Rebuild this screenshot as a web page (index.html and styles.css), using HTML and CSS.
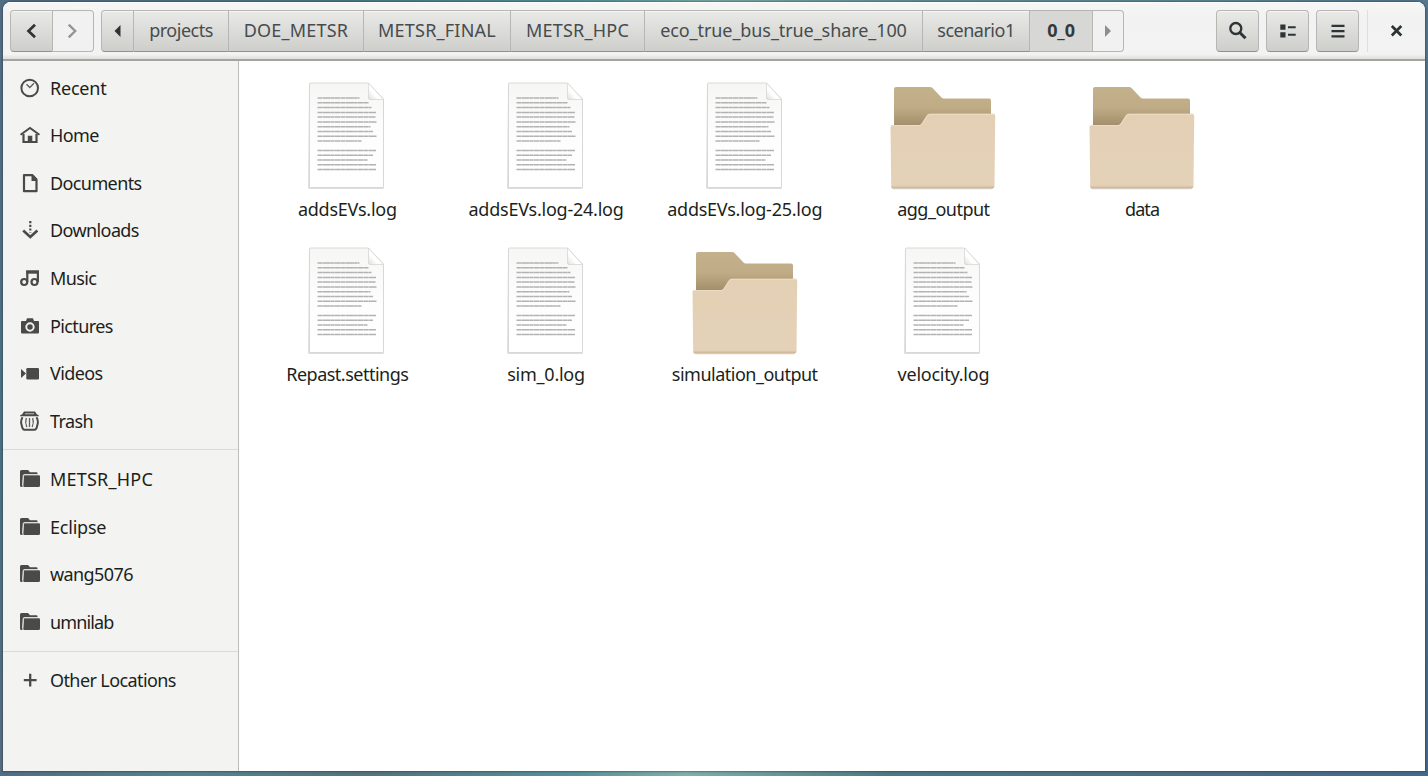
FILE: index.html
```html
<!DOCTYPE html>
<html lang="en">
<head>
<meta charset="utf-8">
<title>0_0</title>
<link rel="stylesheet" href="styles.css">
</head>
<body>
<svg class="defs" width="0" height="0">
  <defs>
    <linearGradient id="paper" x1="0" y1="0" x2="0" y2="1"><stop offset="0" stop-color="#f6f6f5"/><stop offset=".5" stop-color="#fdfdfd"/><stop offset="1" stop-color="#fff"/></linearGradient>
    <linearGradient id="fold" x1="0" y1="1" x2="1" y2="0"><stop offset="0" stop-color="#dededc"/><stop offset=".35" stop-color="#fff"/><stop offset="1" stop-color="#fff"/></linearGradient>
    <linearGradient id="back" gradientUnits="userSpaceOnUse" x1="0" y1="5" x2="0" y2="43"><stop offset="0" stop-color="#c3b18b"/><stop offset=".55" stop-color="#bfac86"/><stop offset="1" stop-color="#a38f6b"/></linearGradient>
    <linearGradient id="front" x1="0" y1="0" x2="0" y2="1"><stop offset="0" stop-color="#e3cfb4"/><stop offset=".96" stop-color="#e4d2b8"/><stop offset="1" stop-color="#cfb48f"/></linearGradient>
    <symbol id="doc" viewBox="0 0 106 108">
      <path d="M15 2h60l15 16v87.500q0 1.500-1.500 1.500h-73q-1.500 0-1.500-1.500z" fill="#000" opacity=".13"/>
      <path d="M16 1h58.500l15 16v87.500q0 1-1 1H16.500q-1 0-1-1V1.500z" fill="url(#paper)" stroke="#d2d2d0" stroke-width=".8"/>
      <path d="M74.500 1v15q0 1.500 1.500 1.500h13.500z" fill="url(#fold)" stroke="#d2d2d0" stroke-width=".7"/>
      <g fill="none" stroke="#b2b2b2" stroke-width="1.500" stroke-dasharray="5 .3 8 .2 3 .3 6 .3">
        <path d="M23.500 16h42M23.500 20.800h51M23.500 25.600h54M23.500 30.400h58.500M23.500 35.100h58M23.500 39.900h59M23.500 44.700h53M23.500 49.500h55.500M23.500 54.300h59M23.500 59h44M23.500 68.500h58.500M23.500 73.200h55.500M23.500 78h50M23.500 82.800h58.500M23.500 87.500h58.500"/>
      </g>
    </symbol>
    <symbol id="folder" viewBox="0 0 106 108">
      <path d="M1.500 104h102v1.500q0 1.800-2 1.800H3.500q-2 0-2-1.800z" fill="#000" opacity=".18"/>
      <path d="M4 44V7q0-2 2-2h34q1.500 0 2.500 1l9 9.500q1 1 2.500 1h45q2 0 2 2V44z" fill="url(#back)"/>
      <path d="M.5 45q0-2 2-2h26q2 0 3-1.500l5.500-8.500q1-1.300 2.500-1.300h63.500q2.200 0 2.200 2l-.7 70.500q0 2-2 2H3.200q-2 0-2-2z" fill="url(#front)"/>
      <path d="M1.500 43.600H29q2 0 3-1.500l5.500-8.500q1-1.300 2.500-1.300h64" fill="none" stroke="#eddcc6" stroke-width="1"/>
    </symbol>
    <symbol id="s-folder" viewBox="0 0 20 20">
      <path d="M1.500 1H8l2 2.200h6.500q1 0 1 1v1H4.800q-1.600 0-1.600 1.600L2.500 18h-1Q0 18 0 16.500v-14Q0 1 1.500 1z" fill="#4a4a48"/>
      <path d="M4.800 6.300h14q1.200 0 1.200 1.200v9q0 1.500-1.500 1.500h-14q-1.200 0-1.200-1.200l.5-9.500q0-1 1-1z" fill="#4a4a48"/>
      <path d="M2.500 16.500l.7-9.700q0-1.200 1.500-1.200h12.800" fill="none" stroke="#dededc" stroke-width="1"/>
    </symbol>
  </defs>
</svg>
<div class="window">
  <header class="header">
    <div class="group nav">
      <button class="btn"><svg class="ic" viewBox="0 0 20 20"><path d="M14 3.700 7.500 10l6.500 6.300" fill="none" stroke="#2e3436" stroke-width="2.700"/></svg></button>
      <button class="btn off"><svg class="ic" viewBox="0 0 20 20"><path d="M5.700 3.700 12.200 10l-6.500 6.300" fill="none" stroke="#929595" stroke-width="2.400"/></svg></button>
    </div>
    <div class="group path">
      <button class="btn p-start"><svg class="ic" viewBox="0 0 20 20"><path d="M12.500 4v12L6.500 10z" fill="#2e3436"/></svg></button>
      <button class="btn p1 tight">projects</button>
      <button class="btn p2 caps">DOE_METSR</button>
      <button class="btn p3 caps">METSR_FINAL</button>
      <button class="btn p4 caps">METSR_HPC</button>
      <button class="btn p5 even">eco_true_bus_true_share_100</button>
      <button class="btn p6 tight">scenario1</button>
      <button class="btn p7 active even">0_0</button>
      <button class="btn off p-end"><svg class="ic" viewBox="0 0 20 20"><path d="M7 4v12l6-6z" fill="#8b8e8f"/></svg></button>
    </div>
    <div class="tools">
      <button class="btn tool"><svg class="ic" viewBox="0 0 20 20"><circle cx="7.800" cy="7.500" r="5.500" fill="none" stroke="#2e3436" stroke-width="2.300"/><path d="m11.500 11.300 6 6" stroke="#2e3436" stroke-width="3"/></svg></button>
      <button class="btn tool"><svg class="ic" viewBox="0 0 20 20"><path d="M2.300 3.500h5.200v5.200H2.300zM2.300 11.200h5.200v5.200H2.300zM10 5.300h7.700v2H10zM10 12.800h7.700v2H10z" fill="#2e3436"/></svg></button>
      <button class="btn tool"><svg class="ic" viewBox="0 0 20 20"><path d="M3.500 3.700h13V6h-13zM3.500 9h13v2.300h-13zM3.500 14.200h13v2.300h-13z" fill="#2e3436"/></svg></button>
    </div>
    <button class="close"><svg class="ic" viewBox="0 0 20 20"><path d="m4.800 5 9.500 9.500M14.300 5 4.800 14.500" stroke="#2e3436" stroke-width="2.700"/></svg></button>
  </header>
  <div class="body">
    <nav class="sidebar">
      <ul class="places">
        <li><svg class="ic" viewBox="0 0 20 20"><circle cx="9.700" cy="10" r="8.300" fill="none" stroke="#4a4a48" stroke-width="2"/><path d="m6.500 6.200 3.300 3.300 4.200-4.300" fill="none" stroke="#5c5c5a" stroke-width="1.300"/></svg><span class="near">Recent</span></li>
        <li><svg class="ic" viewBox="0 0 20 20"><path d="M.5 9.800 10 3l9.500 6.800" fill="none" stroke="#4a4a48" stroke-width="2"/><path d="M3.500 9v8h13V9" fill="none" stroke="#4a4a48" stroke-width="2.200"/><path d="M7.800 10.800h4.500V17H7.800z" fill="#4a4a48"/></svg><span>Home</span></li>
        <li><svg class="ic" viewBox="0 0 20 20"><path d="M4 2.200h8.500l4 4.300v11.700H4z" fill="none" stroke="#4a4a48" stroke-width="2.200" stroke-linejoin="round"/><path d="M11.500 2v6h5.500V6l-4-4z" fill="#4a4a48"/></svg><span>Documents</span></li>
        <li><svg class="ic" viewBox="0 0 20 20"><path d="M10.300 1v11.500" stroke="#4a4a48" stroke-width="2.200" stroke-dasharray="2.200 1.500"/><path d="m3.200 10.500 7.100 6.500 7.100-6.500" fill="none" stroke="#4a4a48" stroke-width="2.600"/></svg><span>Downloads</span></li>
        <li><svg class="ic" viewBox="0 0 20 20"><g fill="none" stroke="#4a4a48" stroke-width="2.200"><circle cx="4.200" cy="14" r="3"/><circle cx="14.500" cy="14" r="3"/><path d="M7.300 14V3.500h10.600V14"/></g><path d="M6.200 2.500H19v3.200H6.200z" fill="#4a4a48"/></svg><span>Music</span></li>
        <li><svg class="ic" viewBox="0 0 20 20"><path d="M2 5h4l1-2.700h6L14 5h4q1 0 1 1v10.500q0 1-1 1H2q-1 0-1-1V6q0-1 1-1z" fill="#4a4a48"/><circle cx="10" cy="11" r="3.700" fill="none" stroke="#f3f3f2" stroke-width="1.900"/></svg><span>Pictures</span></li>
        <li><svg class="ic" viewBox="0 0 20 20"><path d="M1 6l5 4.400L1 15z" fill="#4a4a48"/><rect x="6.300" y="5" width="12.700" height="11.500" rx="1.200" fill="#4a4a48"/></svg><span>Videos</span></li>
        <li><svg class="ic" viewBox="0 0 20 20"><path d="M0 5.200Q0 3.500 2 3.500L4 .5h11l2 3q2 0 2 1.700z" fill="#4a4a48"/><path d="M5 2.700h9" stroke="#aaa" stroke-width="1.200"/><path d="M2.500 6.200Q.2 10 1.700 14.200q.8 4.500 2.800 4.500h10q2 0 2.800-4.500Q18.800 10 16.500 6.200" fill="none" stroke="#4a4a48" stroke-width="2"/><path d="M6.300 7q-1.500 4.500.5 9M9.500 7v9M12.700 7q1.500 4.500-.5 9" fill="none" stroke="#5c5c5a" stroke-width="1.300"/></svg><span>Trash</span></li>
      </ul>
      <ul class="places">
        <li><svg class="ic"><use href="#s-folder"/></svg><span class="caps">METSR_HPC</span></li>
        <li><svg class="ic"><use href="#s-folder"/></svg><span class="near">Eclipse</span></li>
        <li><svg class="ic"><use href="#s-folder"/></svg><span>wang5076</span></li>
        <li><svg class="ic"><use href="#s-folder"/></svg><span class="tighter">umnilab</span></li>
      </ul>
      <ul class="places">
        <li><svg class="ic" viewBox="0 0 20 20"><path d="M10.200 3.800v12.800M3.800 10.200h12.800" stroke="#4a4a48" stroke-width="2.300"/></svg><span>Other Locations</span></li>
      </ul>
    </nav>
    <main class="files">
      <figure><svg><use href="#doc"/></svg><figcaption>addsEVs.log</figcaption></figure>
      <figure><svg><use href="#doc"/></svg><figcaption>addsEVs.log-24.log</figcaption></figure>
      <figure><svg><use href="#doc"/></svg><figcaption>addsEVs.log-25.log</figcaption></figure>
      <figure><svg><use href="#folder"/></svg><figcaption class="tight">agg_output</figcaption></figure>
      <figure><svg><use href="#folder"/></svg><figcaption class="tighter">data</figcaption></figure>
      <figure><svg><use href="#doc"/></svg><figcaption class="tight">Repast.settings</figcaption></figure>
      <figure><svg><use href="#doc"/></svg><figcaption>sim_0.log</figcaption></figure>
      <figure><svg><use href="#folder"/></svg><figcaption class="tight">simulation_output</figcaption></figure>
      <figure><svg><use href="#doc"/></svg><figcaption>velocity.log</figcaption></figure>
    </main>
  </div>
</div>
</body>
</html>
```
FILE: styles.css
```css
* { box-sizing: border-box; }
body {
  margin: 0;
  height: 776px;
  padding: 2px 3px 5px;
  overflow: hidden;
  background:
    linear-gradient(90deg, #536d83, #53858d 13%, #54737f 26%, #55919a 40%, #7fb0ab 48%, #4b7a85 62%, #4c7184 80%, #45698c) bottom / 100% 5px no-repeat,
    linear-gradient(90deg, #536d83, #4d7d8a 25%, #55949a 40%, #7fb0ab 50%, #66929a 65%, #5e8a98 85%, #557891) top / 100% 10px no-repeat,
    linear-gradient(#576e86, #4b7382 60%, #5c6f80) left / 10px 100% no-repeat,
    linear-gradient(#557891, #426a8f) right / 10px 100% no-repeat;
  font: 18px "Noto Sans", sans-serif;
  color: #1c1f20;
}
.defs { position: absolute; }
.window {
  height: 769px;
  display: flex;
  flex-direction: column;
  border-radius: 8px 8px 0 0;
  overflow: hidden;
  background: #fff;
  box-shadow: 0 0 2px 1px rgba(30, 45, 60, .45);
}
.header {
  flex: none;
  height: 59px;
  display: flex;
  align-items: flex-start;
  padding: 8px 6px 0 7px;
  background: linear-gradient(#f6f6f5, #f2f2f2 30%, #f3f3f3 92%, #dededc);
  border-bottom: 2px solid #a4a4a1;
  box-shadow: inset 0 1px #fff;
}
.group { display: flex; }
.nav { width: 84px; margin-right: 7px; }
.nav .btn { flex: 1; }
.btn {
  height: 42px;
  padding: 0 0 2px;
  display: flex;
  align-items: center;
  justify-content: center;
  font: 18px "Noto Sans", sans-serif;
  color: #464c4e;
  white-space: nowrap;
  background: linear-gradient(#e9e9e7, #cececb);
  border: 1px solid #b6b6b3;
  border-left-width: 0;
  border-bottom-color: #92928e;
  box-shadow: inset 0 1px #f6f6f5;
}
.btn:first-child { border-left-width: 1px; border-radius: 4px 0 0 4px; }
.btn:last-child { border-radius: 0 4px 4px 0; }
.btn:has(.ic) { padding: 0; }
.btn.off { background: #f1f1f1; border-bottom-color: #b6b6b3; box-shadow: none; }
.btn.active { background: #d7d7d5; border-bottom-color: #b0b0ad; box-shadow: none; font-weight: 700; color: #34393b; }
.ic { flex: none; width: 20px; height: 20px; }
.p-start { width: 33px; }
.p1 { width: 95px; }
.p2 { width: 135px; }
.p3 { width: 147px; }
.p4 { width: 134px; }
.p5 { width: 278px; }
.p6 { width: 107px; }
.p7 { width: 63px; }
.p-end { width: 31px; }
.tools { display: flex; gap: 7px; margin-left: auto; padding-right: 8px; }
.tools .tool { width: 43px; border-width: 1px; border-radius: 4px; }
.close {
  width: 52px;
  height: 42px;
  padding: 0 0 0 7px;
  display: flex;
  align-items: center;
  justify-content: center;
  background: none;
  border: 0;
  border-left: 1px solid #dededc;
}
.body { flex: 1; display: flex; min-height: 0; }
.sidebar {
  flex: none;
  width: 236px;
  padding-top: 3px;
  background: #f3f3f2;
  border-right: 1px solid #bcbcb9;
}
.places { list-style: none; margin: 0; padding: 0; letter-spacing: -.6px; }
.places + .places { margin-top: 5px; padding-top: 5px; border-top: 1px solid #dadad8; }
.places li { height: 47.550px; display: flex; align-items: center; gap: 10px; padding-left: 17px; }
.files {
  flex: 1;
  display: grid;
  grid-template-columns: repeat(5, 198.700px);
  grid-auto-rows: 165px;
  align-content: start;
  padding: 21px 0 0 9px;
}
figure { margin: 0; display: flex; flex-direction: column; align-items: center; }
figure svg { width: 106px; height: 108px; }
figcaption { margin-top: 7px; line-height: 24px; white-space: nowrap; letter-spacing: -.24px; }
.caps { letter-spacing: .22px; }
.even { letter-spacing: -.08px; }
.near { letter-spacing: -.22px; }
.tight { letter-spacing: -.5px; }
.tighter { letter-spacing: -.85px; }
```
